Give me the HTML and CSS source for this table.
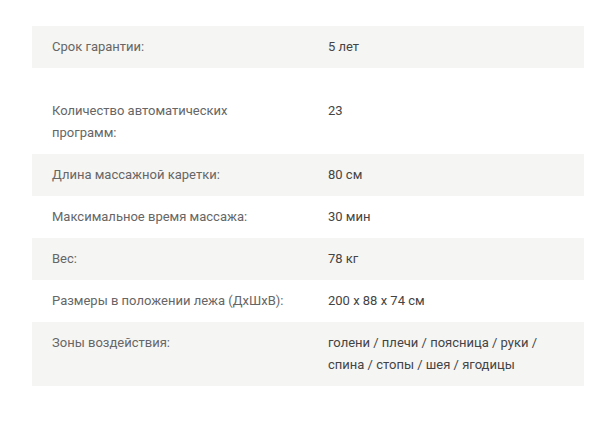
FILE: index.html
```html
<!DOCTYPE html>
<html lang="ru">
<head>
<meta charset="utf-8">
<link rel="stylesheet" href="styles.css">
</head>
<body>
<div class="specs">
  <div class="row gray"><div class="label">Срок гарантии:</div><div class="value">5 лет</div></div>
  <div class="row tall"><div class="label">Количество автоматических программ:</div><div class="value">23</div></div>
  <div class="row gray"><div class="label">Длина массажной каретки:</div><div class="value">80 см</div></div>
  <div class="row"><div class="label">Максимальное время массажа:</div><div class="value">30 мин</div></div>
  <div class="row gray"><div class="label">Вес:</div><div class="value">78 кг</div></div>
  <div class="row"><div class="label">Размеры в положении лежа (ДхШхВ):</div><div class="value">200 x 88 x 74 см</div></div>
  <div class="row gray"><div class="label">Зоны воздействия:</div><div class="value">голени / плечи / поясница / руки / спина / стопы / шея / ягодицы</div></div>
</div>
</body>
</html>
```
FILE: styles.css
```css
html, body {
  margin: 0;
  padding: 0;
  background: #fff;
}
body {
  padding: 26px 31px 0 32px;
  font-family: Roboto, "Liberation Sans", sans-serif;
  font-size: 13px;
  line-height: 22px;
}
.specs {
  display: flex;
  flex-direction: column;
}
.row {
  display: grid;
  grid-template-columns: 1fr 1fr;
}
.row.gray {
  background: #f5f5f3;
}
.label, .value {
  padding: 10px 20px;
}
.label {
  color: #666;
}
.value {
  color: #444;
}
.row.tall .label, .row.tall .value {
  padding-top: 32px;
}
```
